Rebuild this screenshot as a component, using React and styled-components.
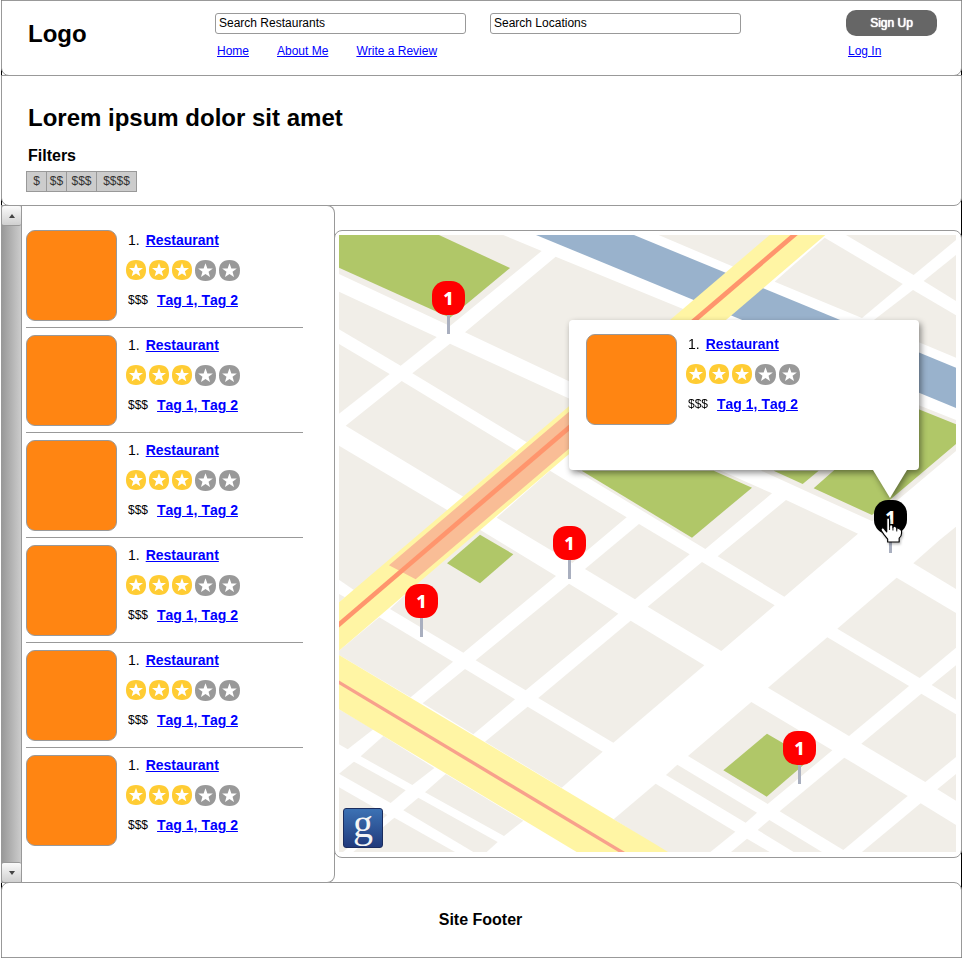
import React from "react";
import styled, { createGlobalStyle, css } from "styled-components";

const line = "#999999";

const GlobalStyle = createGlobalStyle`
  *, *::before, *::after { box-sizing: border-box; }
  body {
    margin: 0;
    background: #ffffff;
    color: #000000;
    font-family: "Liberation Sans", Arial, sans-serif;
    font-size: 12px;
    font-kerning: none;
    line-height: 16px;
  }
  h1, h2, p, ul { margin: 0; padding: 0; }
  button, input { font: inherit; }
  a { color: #0000ff; text-decoration: underline; }
`;

/* ---------- page frame ---------- */

const Page = styled.div`
  margin-left: 1px;
  border: solid #000000;
  border-width: 0 1px;
`;

const panel = css`
  margin: 0 -1px;
  border: 1px solid ${line};
  background: #ffffff;
`;

const Header = styled.header`
  ${panel}
  display: grid;
  grid-template-columns: 187px minmax(0, 1fr) auto;
  height: 76px;
  padding: 9px 24px 0 26px;
  border-radius: 0 0 8px 8px;
`;

const Logo = styled.div`
  padding-top: 8px;
  font-size: 24px;
  font-weight: bold;
  line-height: 32px;
`;

const HeaderMain = styled.div`
  padding-top: 3px;
`;

const Searches = styled.form`
  display: flex;
  gap: 24px;
`;

const SearchInput = styled.input`
  flex: 0 1 251px;
  min-width: 0;
  height: 21px;
  padding: 0 3px 1px;
  border: 1px solid ${line};
  border-radius: 3px;
  background: #ffffff;
  color: #000000;

  &::placeholder {
    color: #000000;
    opacity: 1;
  }
`;

const Nav = styled.nav`
  display: flex;
  gap: 28px;
  padding: 9px 0 0 2px;
`;

const Account = styled.div`
  display: flex;
  flex-direction: column;
  align-items: flex-start;
  gap: 7px;
  width: 91px;
`;

const SignUp = styled.button`
  width: 100%;
  height: 26px;
  padding: 0;
  border: 0;
  border-radius: 10px;
  background: #666666;
  color: #ffffff;
  text-shadow: 0 0 1px #ffffff, 0 0 1px #ffffff;
`;

const LogIn = styled.a`
  margin-left: 2px;
`;

const Intro = styled.section`
  ${panel}
  height: 131px;
  margin-top: -1px;
  padding: 26px 24px 0;
  border-radius: 0 0 8px 8px;
`;

const Title = styled.h1`
  padding-left: 2px;
  font-size: 24px;
  line-height: 32px;
`;

const FilterTitle = styled.h2`
  padding: 12px 0 5px 2px;
  font-size: 16px;
  line-height: 20px;
`;

const FilterBar = styled.div`
  display: flex;
`;

const FilterButton = styled.button`
  width: ${(p) => p.$width}px;
  height: 21px;
  margin-right: -1px;
  padding: 0 0 2px;
  border: 1px solid ${line};
  background: #cccccc;
  color: #333333;
`;

/* ---------- results ---------- */

const Main = styled.main`
  display: grid;
  grid-template-columns: 334px minmax(0, 1fr);
  align-items: stretch;
  margin: -1px -1px 0;
`;

const Results = styled.section`
  display: grid;
  grid-template-columns: 21px minmax(0, 1fr);
  border: 1px solid ${line};
  border-width: 1px 1px 1px 0;
  border-radius: 0 8px 8px 0;
  background: #ffffff;
`;

const ScrollTrack = styled.div`
  display: flex;
  flex-direction: column;
  justify-content: space-between;
  border: solid ${line};
  border-width: 0 1px;
  background: linear-gradient(90deg, #999999, #cccccc);
`;

const ScrollButton = styled.button`
  display: grid;
  place-items: center;
  width: 100%;
  height: 20px;
  padding: 0;
  border: 0 solid ${line};
  border-bottom-width: ${(p) => (p.$up ? "1px" : "0")};
  border-top-width: ${(p) => (p.$up ? "0" : "1px")};
  border-radius: 2px;
  background: linear-gradient(#fafafa, #d0d0d0);
`;

const ResultList = styled.ul`
  padding: 24px 31px 36px 4px;
  list-style: none;
`;

const ResultItem = styled.li`
  & + & {
    margin-top: 6px;
    padding-top: 7px;
    border-top: 1px solid ${line};
  }
`;

const Card = styled.article`
  display: grid;
  grid-template-columns: 91px minmax(0, 1fr);
  gap: 9px;
`;

const Thumb = styled.div`
  height: 91px;
  border: 1px solid ${line};
  border-radius: 9px;
  background: #ff8512;
`;

const CardRow = styled.div`
  display: flex;
  align-items: center;
  gap: ${(p) => p.$gap}px;
  height: 20px;
  margin-bottom: 10px;
  padding-left: 2px;
`;

const StarRow = styled(CardRow)`
  padding-left: 0;
`;

const Rank = styled.span`
  font-size: 14px;
`;

const StrongLink = styled.a`
  font-size: 14px;
  font-weight: bold;
`;

const StarBadge = styled.svg`
  flex: none;
  width: ${(p) => (p.$on ? 20 : 21)}px;
  height: ${(p) => (p.$on ? 20 : 21)}px;
  color: ${(p) => (p.$on ? "#ffcc33" : line)};
`;

/* ---------- map ---------- */

const MapPanel = styled.section`
  align-self: start;
  margin: 25px 0 25px -1px;
  padding: 4px 5px 5px 4px;
  border: 1px solid ${line};
  border-radius: 8px;
  background: #ffffff;
`;

const MapCanvas = styled.div`
  position: relative;
`;

const MapArt = styled.svg`
  display: block;
  width: 100%;
  height: auto;
`;

const Pin = styled.button`
  position: absolute;
  left: ${(p) => (p.$x / 617) * 100}%;
  top: ${(p) => (p.$y / 617) * 100}%;
  display: flex;
  flex-direction: column;
  align-items: center;
  width: 33px;
  padding: 0;
  border: 0;
  background: none;

  &::after {
    content: "";
    width: 3px;
    height: 19px;
    background: #a9afbf;
  }
`;

const PinHead = styled.span`
  width: 33px;
  height: 34px;
  border-radius: 14px;
  background: ${(p) => (p.$active ? "#000000" : "#ff0000")};
  color: #ffffff;
  font-family: "Noto Sans", "Open Sans", sans-serif;
  font-size: 18px;
  font-weight: 800;
  line-height: 35px;
`;

const Hand = styled.svg`
  position: absolute;
  left: 6px;
  top: 17px;
  width: 23px;
  height: 26px;
  filter: drop-shadow(1px 2px 1px rgba(0, 0, 0, 0.25));
  overflow: visible;
`;

const Popup = styled.div`
  position: absolute;
  left: ${(230 / 617) * 100}%;
  top: ${(85 / 617) * 100}%;
  width: 350px;
  height: 150px;
  padding: 14px 17px;
  border-radius: 4px;
  background: #ffffff;
  filter: drop-shadow(2px 3px 3px rgba(0, 0, 0, 0.45));

  &::after {
    content: "";
    position: absolute;
    right: 12px;
    top: 100%;
    border: 17px solid transparent;
    border-top: 28px solid #ffffff;
    border-bottom: 0;
  }
`;

const GoogleBadge = styled.a`
  position: absolute;
  left: 4px;
  bottom: 4px;
  width: 40px;
  height: 40px;
  border: 1px solid #1b2d5e;
  border-radius: 3px;
  background: linear-gradient(#3c72b4, #213a7c);
  color: #f4f4f4;
  font-family: "Liberation Serif", serif;
  font-size: 40px;
  line-height: 30px;
  text-align: center;
  text-decoration: none;
`;

const Footer = styled.footer`
  ${panel}
  height: 76px;
  margin-top: -1px;
  padding: 27px 2px 0 0;
  border-radius: 8px 8px 0 0;
  font-size: 16px;
  font-weight: bold;
  line-height: 20px;
  text-align: center;
`;

/* City blocks, in map units (three per pixel at the default size). */
const blocks = [
  "0,0 493,0 608,48 333,273 0,117",
  "650,65 1100,250 900,538 378,292",
  "959,0 1320,0 1187,97",
  "1457,8 1691,147 1569,249 1307,140",
  "1521,0 1851,0 1851,15 1724,120",
  "1851,60 1754,138 1851,198",
  "1722,165 1851,241 1851,368 1596,262",
  "1266,707 1600,859 1851,648 1851,555 1700,495 1300,690",
  "712,707 1099,942 1299,775 1141,705",
  "633,707 863,847 700,984 473,848",
  "900,867 1052,958 888,1093 738,1002",
  "1341,795 1557,896 1336,1085 1136,964",
  "1089,981 1307,1111 1147,1248 926,1115",
  "875,1157 1096,1291 823,1523 598,1389",
  "690,1046 838,1136 560,1366 410,1276",
  "413,878 651,1023 373,1253 153,1122",
  "378,1302 528,1393 403,1498 251,1405",
  "566,1415 791,1550 668,1658 438,1520",
  "121,1147 342,1280 215,1387 0,1260 0,1247",
  "0,170 293,306 185,392 0,283",
  "0,327 152,417 0,536",
  "333,326 700,495 700,520 563,622 220,415",
  "188,438 533,647 373,785 20,572",
  "0,632 328,827 48,1067 0,1034",
  "0,1077 18,1087 0,1102",
  "0,1423 103,1483 26,1543 0,1528",
  "133,1503 286,1599 220,1650 65,1564",
  "45,1580 200,1666 155,1704 0,1616",
  "0,1657 145,1740 12,1851 0,1851",
  "320,1617 553,1757 495,1803 258,1672",
  "238,1688 476,1821 443,1851 403,1851 193,1726",
  "166,1748 348,1851 43,1851",
  "824,1753 950,1646 1189,1790 1114,1851 981,1851",
  "1015,1589 1254,1733 1220,1763 981,1620",
  "1237,1401 1480,1546 1286,1707 1047,1563",
  "1465,1207 1710,1353 1530,1503 1287,1358",
  "1673,1028 1851,1134 1851,1238 1742,1329 1495,1181",
  "1802,915 1851,875 1851,1062 1723,985",
  "1851,1291 1778,1350 1851,1394",
  "1747,1376 1851,1438 1851,1566 1759,1641 1567,1526",
  "1851,1617 1795,1663 1851,1697",
  "1516,1568 1706,1683 1513,1845 1322,1729",
  "1745,1705 1851,1770 1851,1851 1569,1851",
  "1291,1755 1449,1851 1364,1851 1256,1785",
  "1224,1811 1292,1851 1176,1851",
];

const parks = [
  "0,0 300,0 513,99 333,248 0,98",
  "1486,705 1700,507 1851,568 1851,627 1599,840 1424,760",
  "1304,707 1439,707 1391,747",
  "728,707 1124,707 1239,758 1059,908",
  "324,985 423,899 523,958 423,1045",
  "1284,1496 1414,1572 1283,1685 1153,1606",
];

const pins = [
  { x: 93, y: 46 },
  { x: 214, y: 291 },
  { x: 66, y: 349 },
  { x: 444, y: 496 },
];

const filters = [
  { label: "$", width: 21 },
  { label: "$$", width: 21 },
  { label: "$$$", width: 31 },
  { label: "$$$$", width: 41 },
];

function Star({ on }) {
  return (
    <StarBadge $on={on} viewBox="0 0 20 20" aria-hidden="true">
      <path
        fill="currentColor"
        d="M10 0C17 0 20 4 20 10S17 20 10 20 0 16 0 10 3 0 10 0Z"
      />
      <path
        fill="#ffffff"
        d="M10 3 11.800 8 17 8.100 12.900 11.300 14.300 16.300 10 13.400 5.700 16.300 7.100 11.300 3 8.100 8.200 8Z"
      />
    </StarBadge>
  );
}

function RestaurantCard() {
  return (
    <Card>
      <Thumb />
      <div>
        <CardRow $gap={6}>
          <Rank>1.</Rank>
          <StrongLink href="#restaurant">Restaurant</StrongLink>
        </CardRow>
        <StarRow $gap={3} role="img" aria-label="3 of 5 stars">
          {[1, 2, 3, 4, 5].map((n) => (
            <Star key={n} on={n <= 3} />
          ))}
        </StarRow>
        <CardRow $gap={9}>
          <span>$$$</span>
          <StrongLink href="#tags">Tag 1, Tag 2</StrongLink>
        </CardRow>
      </div>
    </Card>
  );
}

function CityMap() {
  return (
    <MapArt viewBox="0 0 1851 1851" role="img" aria-label="Street map">
      <rect width="1851" height="1851" fill="#ffffff" />
      <g fill="#f1eee8">
        {blocks.map((points) => (
          <polygon key={points} points={points} />
        ))}
      </g>
      <g fill="#b0c768">
        {parks.map((points) => (
          <polygon key={points} points={points} />
        ))}
      </g>
      <polygon fill="#99b2cc" points="591,0 885,0 1851,398 1851,519" />
      <polygon fill="#fff5a4" points="1292,0 1459,0 0,1247 0,1102" />
      <polygon fill="#fff5a4" points="0,1260 948,1827 987,1851 713,1851 0,1423" />
      <polygon fill="#f9bd96" points="150,991 690,530 690,641 230,1033" />
      <path stroke="#ff956d" strokeWidth="14" d="M-10 1177 1376-9" />
      <path stroke="#f8a18c" strokeWidth="10" d="M-10 1336 860 1858" />
    </MapArt>
  );
}

function ScrollArrow({ up }) {
  return (
    <svg width="6" height="4" viewBox="0 0 6 4" aria-hidden="true">
      <path fill="#444444" d={up ? "M0 4 3 0 6 4Z" : "M0 0H6L3 4Z"} />
    </svg>
  );
}

export default function App() {
  return (
    <>
      <GlobalStyle />
      <Page>
        <Header>
          <Logo>Logo</Logo>
          <HeaderMain>
            <Searches>
              <SearchInput aria-label="Search Restaurants" placeholder="Search Restaurants" />
              <SearchInput aria-label="Search Locations" placeholder="Search Locations" />
            </Searches>
            <Nav>
              <a href="#home">Home</a>
              <a href="#about">About Me</a>
              <a href="#review">Write a Review</a>
            </Nav>
          </HeaderMain>
          <Account>
            <SignUp type="button">Sign Up</SignUp>
            <LogIn href="#login">Log In</LogIn>
          </Account>
        </Header>

        <Intro>
          <Title>Lorem ipsum dolor sit amet</Title>
          <FilterTitle id="filters">Filters</FilterTitle>
          <FilterBar role="group" aria-labelledby="filters">
            {filters.map((f) => (
              <FilterButton key={f.label} type="button" $width={f.width}>
                {f.label}
              </FilterButton>
            ))}
          </FilterBar>
        </Intro>

        <Main>
          <Results aria-label="Results">
            <ScrollTrack>
              <ScrollButton type="button" $up aria-label="Scroll up">
                <ScrollArrow up />
              </ScrollButton>
              <ScrollButton type="button" aria-label="Scroll down">
                <ScrollArrow />
              </ScrollButton>
            </ScrollTrack>
            <ResultList>
              {[0, 1, 2, 3, 4, 5].map((n) => (
                <ResultItem key={n}>
                  <RestaurantCard />
                </ResultItem>
              ))}
            </ResultList>
          </Results>

          <MapPanel aria-label="Map">
            <MapCanvas>
              <CityMap />
              {pins.map((p) => (
                <Pin key={p.x} type="button" $x={p.x} $y={p.y}>
                  <PinHead>1</PinHead>
                </Pin>
              ))}
              <Popup>
                <RestaurantCard />
              </Popup>
              <Pin type="button" $x={535} $y={265}>
                <PinHead $active>1</PinHead>
                <Hand viewBox="0 0 24 27" aria-hidden="true">
                  <path
                    fill="#ffffff"
                    stroke="#000000"
                    strokeWidth="1.200"
                    strokeLinejoin="round"
                    d="M7 2.500Q7 1 8.500 1T10 2.500V9.500Q10 8 11.500 8T13.500 10V11Q13.500 9.500 15 9.500T17.500 11.500V12.500Q17.500 11 19 11.500T22.500 14V17Q22.500 20 20 22V26H8V23Q6 20.500 4 18L1.500 14.500Q.5 12.500 2 11.500T5 13L7 15.500Z"
                  />
                  <path stroke="#000000" strokeWidth="1" d="M10 9V13.500M13.500 10.500V14M17.500 12V15" />
                </Hand>
              </Pin>
              <GoogleBadge href="#google" aria-label="Google">
                g
              </GoogleBadge>
            </MapCanvas>
          </MapPanel>
        </Main>

        <Footer>Site Footer</Footer>
      </Page>
    </>
  );
}
